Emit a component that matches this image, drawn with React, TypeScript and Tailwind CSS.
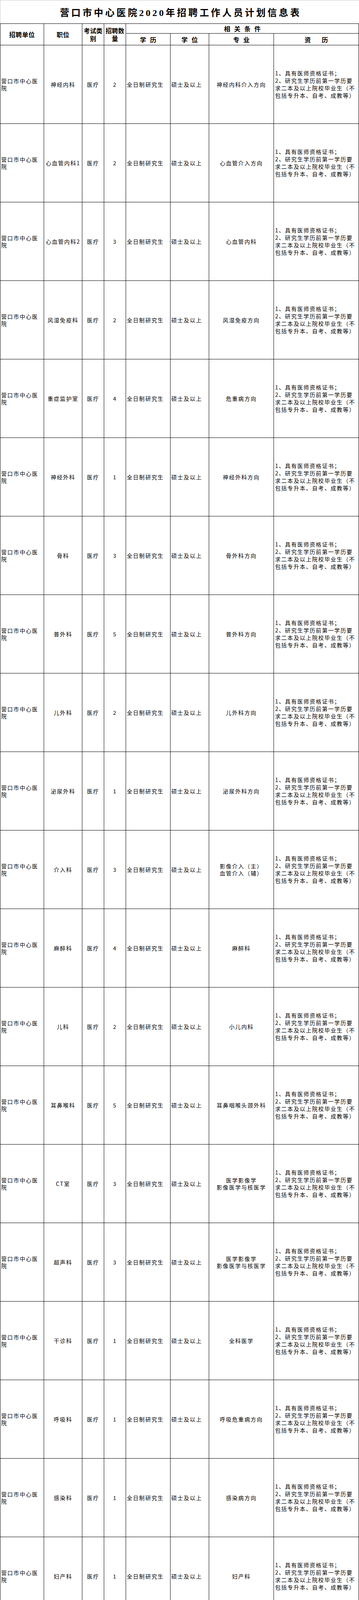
import React from "react";

type Row = {
  post: string;
  count: string;
  major: string[];
};

const ROWS: Row[] = [
  { post: "神经内科", count: "2", major: ["神经内科介入方向"] },
  { post: "心血管内科1", count: "2", major: ["心血管介入方向"] },
  { post: "心血管内科2", count: "3", major: ["心血管内科"] },
  { post: "风湿免疫科", count: "2", major: ["风湿免疫方向"] },
  { post: "重症监护室", count: "4", major: ["危重病方向"] },
  { post: "神经外科", count: "1", major: ["神经外科方向"] },
  { post: "骨科", count: "3", major: ["骨外科方向"] },
  { post: "普外科", count: "5", major: ["普外科方向"] },
  { post: "儿外科", count: "2", major: ["儿外科方向"] },
  { post: "泌尿外科", count: "1", major: ["泌尿外科方向"] },
  { post: "介入科", count: "3", major: ["影像介入（主）", "血管介入（辅）"] },
  { post: "麻醉科", count: "4", major: ["麻醉科"] },
  { post: "儿科", count: "2", major: ["小儿内科"] },
  { post: "耳鼻喉科", count: "5", major: ["耳鼻咽喉头颈外科"] },
  { post: "CT室", count: "3", major: ["医学影像学", "影像医学与核医学"] },
  { post: "超声科", count: "3", major: ["医学影像学", "影像医学与核医学"] },
  { post: "干诊科", count: "1", major: ["全科医学"] },
  { post: "呼吸科", count: "1", major: ["呼吸危重病方向"] },
  { post: "感染科", count: "1", major: ["感染病方向"] },
  { post: "妇产科", count: "1", major: ["妇产科"] },
];

const QUALIFY = [
  "1、具有医师资格证书；",
  "2、研究生学历前第一学历要",
  "求二本及以上院校毕业生（不",
  "包括专升本、自考、成教等）",
];

const cell = "border border-black align-middle p-0";

export default function App() {
  return (
    <div className="w-[920px] bg-white font-['Noto_Sans_CJK_SC',sans-serif] text-black">
      <div className="flex h-[60px] items-center justify-center border-l border-t border-[#c8c8c8] pt-[4px]">
        <h1 className="pl-[5px] font-['Liberation_Serif','Noto_Sans_CJK_SC',serif] text-[24px] font-bold leading-none tracking-[5px]">
          营口市中心医院2020年招聘工作人员计划信息表
        </h1>
      </div>

      <table className="w-[919px] table-fixed border-collapse">
        <colgroup>
          <col className="w-[112px]" />
          <col className="w-[98px]" />
          <col className="w-[56px]" />
          <col className="w-[56px]" />
          <col className="w-[114px]" />
          <col className="w-[99px]" />
          <col className="w-[166px]" />
          <col className="w-[218px]" />
        </colgroup>
        <thead className="text-[16px] font-bold leading-[20px]">
          <tr className="h-[25px]">
            <th rowSpan={2} className={`${cell} tracking-[0.5px]`}>
              招聘单位
            </th>
            <th rowSpan={2} className={`${cell} tracking-[0.5px]`}>
              职位
            </th>
            <th rowSpan={2} className={cell}>
              考试类
              <br />别
            </th>
            <th rowSpan={2} className={cell}>
              招聘数
              <br />量
            </th>
            <th colSpan={4} className={`${cell} pl-[10px] tracking-[10px]`}>
              相关条件
            </th>
          </tr>
          <tr className="h-[30px]">
            <th className={`${cell} pl-[10px] tracking-[10px]`}>学历</th>
            <th className={`${cell} pl-[10px] tracking-[10px]`}>学位</th>
            <th className={`${cell} pl-[10px] tracking-[10px]`}>专业</th>
            <th className={`${cell} pl-[28px] tracking-[28px]`}>资历</th>
          </tr>
        </thead>
        <tbody className="text-[14px] leading-[18px] tracking-[1.8px]">
          {ROWS.map((r) => (
            <tr key={r.post} className="h-[201px]">
              <td className={`${cell} px-[2px] text-left`}>
                营口市中心医
                <br />院
              </td>
              <td className={`${cell} whitespace-nowrap text-center`}>{r.post}</td>
              <td className={`${cell} text-center`}>医疗</td>
              <td className={`${cell} text-center`}>{r.count}</td>
              <td className={`${cell} whitespace-nowrap px-[2px] text-left`}>全日制研究生</td>
              <td className={`${cell} whitespace-nowrap px-[2px] text-left`}>硕士及以上</td>
              <td className={`${cell} whitespace-nowrap text-center`}>
                {r.major.map((m) => (
                  <div key={m}>{m}</div>
                ))}
              </td>
              <td className={`${cell} whitespace-nowrap px-[3px] text-left leading-[19px]`}>
                {QUALIFY.map((q) => (
                  <div key={q}>{q}</div>
                ))}
              </td>
            </tr>
          ))}
        </tbody>
      </table>
    </div>
  );
}
